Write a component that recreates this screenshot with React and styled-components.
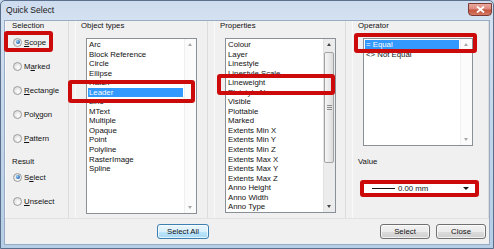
import React from 'react';
import styled, { createGlobalStyle, css } from 'styled-components';

const GlobalStyle = createGlobalStyle`
  html, body {
    margin: 0;
    padding: 0;
    background: #c4d6ea;
  }
  body {
    font-family: 'Liberation Sans', Arial, sans-serif;
    color: #111;
  }
`;

const Window = styled.div`
  position: relative;
  width: 494px;
  height: 249px;
  box-sizing: border-box;
  display: flex;
  flex-direction: column;
  padding: 0 4px 4px;
  border: 1px solid #5a6f8c;
  border-radius: 5px 5px 0 0;
  background: linear-gradient(180deg, #cddcee 0%, #d4e1f1 8%, #c3d6eb 50%, #b5cee6 100%);
  overflow: hidden;
`;

const TitleBar = styled.div`
  height: 20px;
  display: flex;
  align-items: flex-start;
`;

const Title = styled.span`
  margin: 4px 0 0 1px;
  font-size: 8.6px;
  line-height: 10px;
  color: #1a1a1a;
`;

const CloseButton = styled.div`
  margin: 2px -3px 0 auto;
  width: 24px;
  height: 13px;
  box-sizing: border-box;
  border: 1px solid #7b3b34;
  border-radius: 0 0 4px 4px;
  background: linear-gradient(180deg, #e9a89d 0%, #dc8a7c 45%, #c5523f 55%, #d57a62 100%);
  display: flex;
  align-items: center;
  justify-content: center;
`;

const Client = styled.div`
  flex: 1;
  display: flex;
  flex-direction: column;
  background: #f0f0f0;
  box-shadow: 0 0 0 1px #97abc4;
  font-size: 7.8px;
`;

const Panels = styled.div`
  height: 197px;
  display: flex;
  gap: 6px;
`;

const Panel = styled.div`
  width: ${p => p.$w}px;
  box-sizing: border-box;
  display: flex;
  flex-direction: column;
  padding-left: ${p => (p.$side ? 7 : 6)}px;
  box-shadow: inset -1px 0 #dcdcdc, inset 1px 0 #fafafa;
`;

const GroupLabel = styled.div`
  height: 10px;
  line-height: 10px;
  margin-top: ${p => p.$top || 0}px;
  white-space: nowrap;
`;

const RadioRow = styled.div`
  height: 24px;
  display: flex;
  align-items: center;
  gap: 2px;
  margin-top: ${p => p.$top || 0}px;
`;

const RadioCircle = styled.span`
  position: relative;
  width: 9px;
  height: 9px;
  margin-left: 1px;
  box-sizing: border-box;
  border-radius: 50%;
  border: 1px solid #9c9c9c;
  background: radial-gradient(circle at 60% 65%, #ffffff 0%, #e6e6e6 60%, #d0d0d0 100%);
  ${p =>
    p.$checked &&
    css`
      &::after {
        content: '';
        position: absolute;
        left: 1.5px;
        top: 1.5px;
        width: 4px;
        height: 4px;
        border-radius: 50%;
        background: radial-gradient(circle at 35% 35%, #9fd0f5 0%, #2b74c0 60%, #1a4f8c 100%);
      }
    `}
`;

const Accel = styled.span`
  text-decoration: underline;
  text-underline-offset: 1px;
`;

const ListBox = styled.div`
  width: ${p => p.$w}px;
  height: ${p => p.$h}px;
  margin: 7px 0 0 5px;
  box-sizing: border-box;
  border: 1px solid #8a8f98;
  background: #fff;
  display: flex;
`;

const Items = styled.div`
  flex: 1;
  padding: 1px;
  overflow: hidden;
`;

const Item = styled.div`
  height: 9.55px;
  line-height: 9.55px;
  padding-left: 1px;
  white-space: nowrap;
  ${p =>
    p.$selected &&
    css`
      background: #3399ff;
      color: #fff;
    `}
`;

const ScrollBar = styled.div`
  width: ${p => p.$w || 12}px;
  display: flex;
  flex-direction: column;
  background: ${p => (p.$active ? '#ececec' : '#fbfbfb')};
  box-shadow: inset 1px 0 ${p => (p.$active ? '#e2e2e2' : '#efefef')};
`;

const ArrowBox = styled.div`
  height: 11px;
  display: flex;
  align-items: center;
  justify-content: center;
`;

const Arrow = styled.span`
  width: 0;
  height: 0;
  border-left: 2.5px solid transparent;
  border-right: 2.5px solid transparent;
  ${p =>
    p.$down
      ? css`border-top: 3px solid ${p.$active ? '#444' : '#a8a8a8'};`
      : css`border-bottom: 3px solid ${p.$active ? '#444' : '#a8a8a8'};`}
`;

const Track = styled.div`
  flex: 1;
  display: flex;
  flex-direction: column;
`;

const Thumb = styled.div`
  margin: 2px 0 0 1px;
  width: 10px;
  height: 111px;
  box-sizing: border-box;
  border: 1px solid #a3a3a3;
  border-radius: 2px;
  background: linear-gradient(90deg, #f6f6f6 0%, #e9e9e9 50%, #dcdcdc 100%);
  display: flex;
  flex-direction: column;
  align-items: center;
  justify-content: center;
  gap: 1px;
`;

const Grip = styled.span`
  width: 5px;
  height: 1px;
  background: #8c8c8c;
`;

const Combo = styled.div`
  width: 113px;
  height: 13px;
  margin: 15px 0 0 5px;
  box-sizing: border-box;
  border: 1px solid #b4b8c0;
  background: #fff;
  display: flex;
  align-items: center;
  padding-left: 8px;
`;

const LineSample = styled.span`
  width: 23px;
  height: 1px;
  margin-right: 3px;
  background: #111;
`;

const ComboArrow = styled.span`
  margin: 0 6px 0 auto;
  width: 0;
  height: 0;
  border-left: 3px solid transparent;
  border-right: 3px solid transparent;
  border-top: 3px solid #111;
`;

const ButtonBar = styled.div`
  flex: 1;
  display: flex;
  align-items: flex-start;
  padding: 5px 3px 0 152px;
  border-top: 1px solid #e2e2e2;
`;

const Button = styled.div`
  width: ${p => p.$w}px;
  height: 15px;
  box-sizing: border-box;
  margin-left: ${p => p.$ml || 0}px;
  border: 1px solid ${p => (p.$default ? '#3c7fb1' : '#707070')};
  border-radius: 3px;
  background: ${p =>
    p.$default
      ? 'linear-gradient(180deg, #eaf6fd 0%, #d9f0fc 50%, #bee6fd 50%, #a7d9f5 100%)'
      : 'linear-gradient(180deg, #f2f2f2 0%, #ebebeb 50%, #dddddd 50%, #cfcfcf 100%)'};
  box-shadow: inset 0 0 0 1px rgba(255, 255, 255, 0.7);
  display: flex;
  align-items: center;
  justify-content: center;
  line-height: 13px;
`;

const Spacer = styled.div`
  flex: 1;
`;

const Highlight = styled.div`
  position: absolute;
  box-sizing: border-box;
  border: 4px solid #cc0a0a;
  border-radius: 3px;
  pointer-events: none;
`;

const objectTypes = [
  'Arc', 'Block Reference', 'Circle', 'Ellipse', 'Hatch', 'Leader', 'Line', 'MText',
  'Multiple', 'Opaque', 'Point', 'Polyline', 'RasterImage', 'Spline',
];

const properties = [
  'Colour', 'Layer', 'Linestyle', 'Linestyle Scale', 'Lineweight', 'Plotstyle Name',
  'Visible', 'Plottable', 'Marked', 'Extents Min X', 'Extents Min Y', 'Extents Min Z',
  'Extents Max X', 'Extents Max Y', 'Extents Max Z', 'Anno Height', 'Anno Width', 'Anno Type',
];

const operators = ['= Equal', '<> Not Equal'];

const highlights = [
  { left: 3, top: 30, width: 49, height: 21 },
  { left: 67, top: 79, width: 127, height: 23 },
  { left: 216, top: 73, width: 118, height: 21 },
  { left: 353, top: 32, width: 123, height: 20 },
  { left: 359, top: 179, width: 119, height: 17 },
];

function Radio({ checked, label, accel, top }) {
  const i = label.indexOf(accel);
  return (
    <RadioRow $top={top}>
      <RadioCircle $checked={checked} />
      <span>
        {label.slice(0, i)}
        <Accel>{accel}</Accel>
        {label.slice(i + 1)}
      </span>
    </RadioRow>
  );
}

function List({ items, selected, w, h, scroll }) {
  return (
    <ListBox $w={w} $h={h}>
      <Items>
        {items.map(item => (
          <Item key={item} $selected={item === selected}>
            {item}
          </Item>
        ))}
      </Items>
      <ScrollBar $active={scroll}>
        <ArrowBox>
          <Arrow $active={scroll} />
        </ArrowBox>
        <Track>
          {scroll && (
            <Thumb>
              <Grip />
              <Grip />
              <Grip />
            </Thumb>
          )}
        </Track>
        <ArrowBox>
          <Arrow $down $active={scroll} />
        </ArrowBox>
      </ScrollBar>
    </ListBox>
  );
}

export default function App() {
  return (
    <>
      <GlobalStyle />
      <Window>
        <TitleBar>
          <Title>Quick Select</Title>
          <CloseButton>
            <svg width="9" height="7" viewBox="0 0 9 7">
              <path d="M1 0.5 L8 6.5 M8 0.5 L1 6.5" stroke="#fff" strokeWidth="1.8" />
            </svg>
          </CloseButton>
        </TitleBar>
        <Client>
          <Panels>
            <Panel $w={64} $side>
              <GroupLabel>Selection</GroupLabel>
              <Radio checked label="Scope" accel="S" top={-1} />
              <Radio label="Marked" accel="a" />
              <Radio label="Rectangle" accel="R" />
              <Radio label="Polygon" accel="y" />
              <Radio label="Pattern" accel="P" />
              <GroupLabel $top={7}>Result</GroupLabel>
              <Radio checked label="Select" accel="e" top={-2} />
              <Radio label="Unselect" accel="U" />
            </Panel>
            <Panel $w={133}>
              <GroupLabel>Object types</GroupLabel>
              <List items={objectTypes} selected="Leader" w={111} h={176} />
            </Panel>
            <Panel $w={132}>
              <GroupLabel>Properties</GroupLabel>
              <List items={properties} w={111} h={175} scroll />
            </Panel>
            <Panel $w={137}>
              <GroupLabel>Operator</GroupLabel>
              <List items={operators} selected="= Equal" w={110} h={108} />
              <GroupLabel $top={11}>Value</GroupLabel>
              <Combo>
                <LineSample />
                <span>0.00 mm</span>
                <ComboArrow />
              </Combo>
            </Panel>
          </Panels>
          <ButtonBar>
            <Button $w={52} $default>
              Select All
            </Button>
            <Spacer />
            <Button $w={50}>Select</Button>
            <Button $w={50} $ml={6}>
              Close
            </Button>
          </ButtonBar>
        </Client>
        {highlights.map((h, i) => (
          <Highlight key={i} style={h} />
        ))}
      </Window>
    </>
  );
}
